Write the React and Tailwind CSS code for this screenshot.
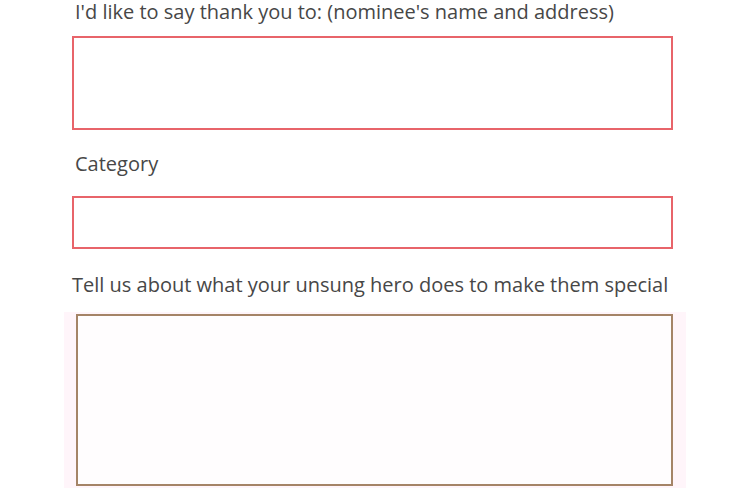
import React from 'react';

const labelFont = { fontFamily: '"Open Sans", "Liberation Sans", sans-serif' };

export default function App() {
  return (
    <div className="w-[752px] h-[500px] bg-white overflow-hidden" style={labelFont}>
      <form className="flex flex-col pl-[72px] pr-[79px]">
        <label className="block pl-[3px] text-[20px] leading-[24px] text-[#474747]">
          I'd like to say thank you to: (nominee's name and address)
        </label>
        <textarea className="mt-[12px] h-[94px] w-full border-2 border-[#e8646a] bg-white resize-none outline-none" />

        <label className="block pl-[3px] mt-[22px] text-[20px] leading-[24px] text-[#474747]">
          Category
        </label>
        <input type="text" className="mt-[20px] h-[53px] w-full border-2 border-[#e8646a] bg-white outline-none" />

        <label className="block mt-[24px] text-[20px] leading-[24px] text-[#474747]">
          Tell us about what your unsung hero does to make them special
        </label>
        <div className="mt-[15px] -ml-[8px] -mr-[13px] pl-[12px] pr-[13px] py-[2px] bg-[#fff5fa]">
          <textarea className="block h-[172px] w-full border-2 border-[#a58467] bg-[#fffdfe] resize-none outline-none" />
        </div>
      </form>
    </div>
  );
}
